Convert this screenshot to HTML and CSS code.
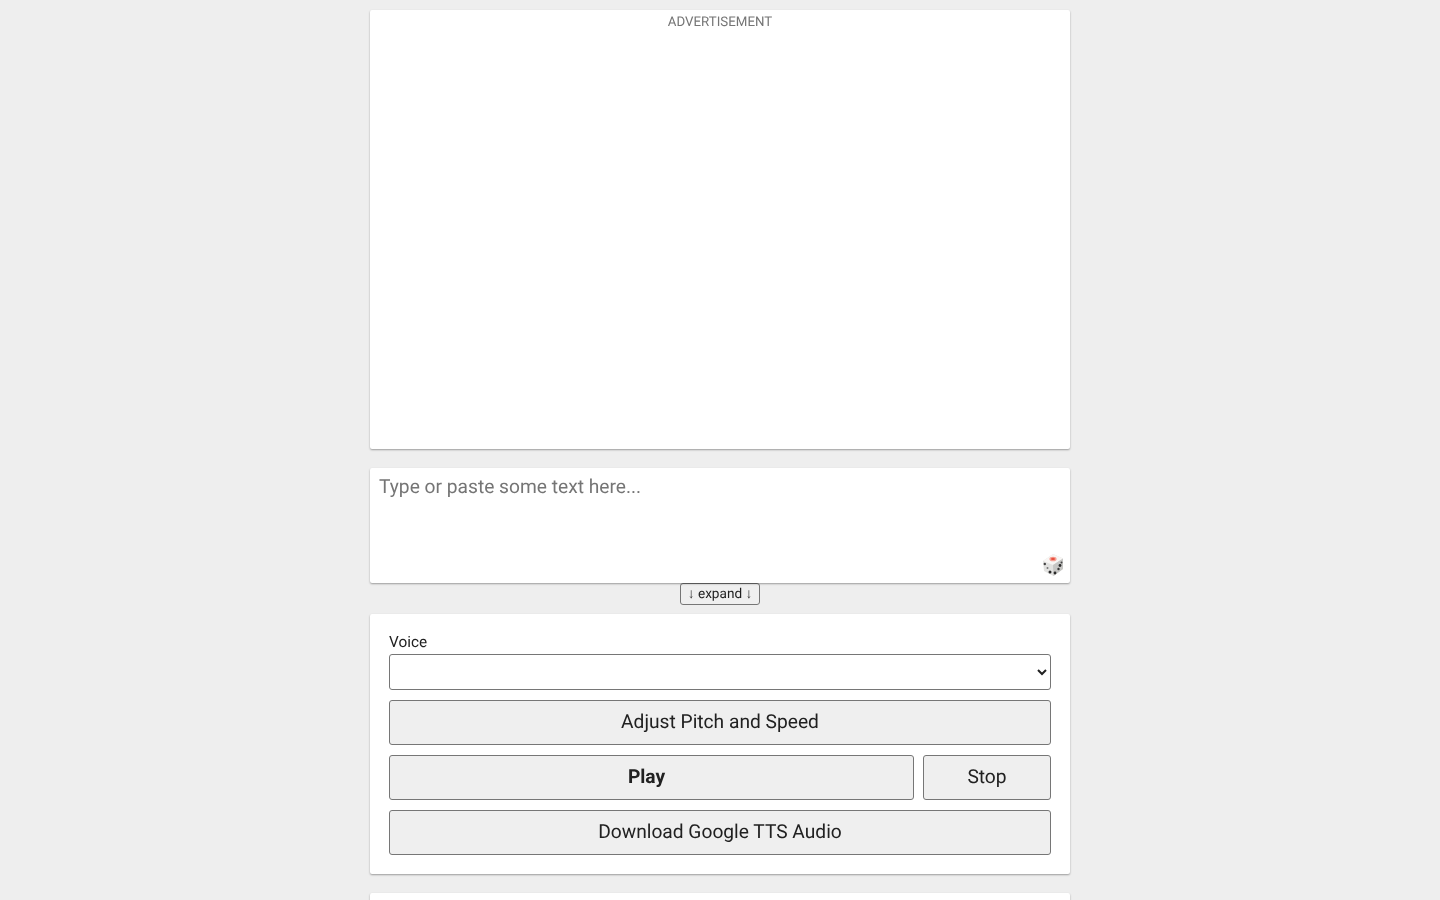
FILE: index.html
```html
<!DOCTYPE html>
<html lang="en">
<head>
<meta charset="utf-8">
<title>Text to Speech</title>
<link rel="stylesheet" href="styles.css">
</head>
<body>
<main class="page">
  <section class="card ad-card">
    <div class="ad-label">ADVERTISEMENT</div>
  </section>
  <section class="card text-card">
    <textarea class="text-input" placeholder="Type or paste some text here..."></textarea>
    <svg class="dice" viewBox="0 0 22 24" aria-hidden="true">
      <path d="M11 1 21 5.5 21 16 11.500 23 2 18 1 8Z" fill="#e2e2e0"/>
      <path d="M11 1 21 5.500 11 12 1 8Z" fill="#f8f6f4"/>
      <path d="M11 12 21 5.500 21 16 11.500 23Z" fill="#c6c6c4"/>
      <ellipse cx="11" cy="6" rx="3.600" ry="2.300" fill="#f6a094"/>
      <ellipse cx="11" cy="5.900" rx="1.900" ry="1.200" fill="#e8503f"/>
      <circle cx="2.800" cy="11" r="1.200" fill="#444"/>
      <circle cx="8" cy="19" r="1.500" fill="#2a2a2a"/>
      <circle cx="5.500" cy="15" r="1" fill="#777"/>
      <circle cx="13" cy="20" r="1.400" fill="#2a2a2a"/>
      <circle cx="16.500" cy="16" r="1.200" fill="#3a3a3a"/>
      <circle cx="18" cy="12.500" r="1.400" fill="#2a2a2a"/>
      <circle cx="19.500" cy="9.500" r="1" fill="#444"/>
    </svg>
  </section>
  <div class="expand-row">
    <button class="expand-btn" type="button">↓ expand ↓</button>
  </div>
  <section class="card controls">
    <div class="voice-field">
      <label class="voice-label" for="voice">Voice</label>
      <select class="voice-select" id="voice"><option></option></select>
    </div>
    <button class="action" type="button">Adjust Pitch and Speed</button>
    <div class="play-row">
      <button class="action play" type="button">Play</button>
      <button class="action stop" type="button">Stop</button>
    </div>
    <button class="action" type="button">Download Google TTS Audio</button>
  </section>
  <section class="card next-card"></section>
</main>
</body>
</html>
```

FILE: styles.css
```css
* {
  box-sizing: border-box;
  text-rendering: geometricPrecision;
}

html,
body {
  margin: 0;
  height: 900px;
  overflow: hidden;
}

body {
  background: #eeeeee;
  font-family: Roboto, "Liberation Sans", sans-serif;
  color: #212121;
}

.page {
  width: 700px;
  margin: 0 auto;
  padding-top: 10px;
  display: flex;
  flex-direction: column;
  opacity: 0.999;
}

.card {
  background: #ffffff;
  border-radius: 2px;
  box-shadow: 0 1px 2px rgba(0, 0, 0, 0.35);
}

.ad-card {
  height: 439px;
  margin-bottom: 19px;
  padding-top: 5px;
}

.ad-label {
  font-size: 13.3px;
  line-height: 15px;
  text-align: center;
  color: #757575;
}

.text-card {
  position: relative;
  height: 115px;
}

.text-input {
  display: block;
  width: 100%;
  height: 100%;
  padding: 7px 9px;
  border: 0;
  outline: 0;
  resize: none;
  background: transparent;
  font: 19.2px/24px Roboto, "Liberation Sans", sans-serif;
  color: #212121;
}

.text-input::placeholder {
  color: #757575;
  opacity: 1;
}

.dice {
  position: absolute;
  right: 6px;
  bottom: 6px;
  width: 22px;
  height: 24px;
  filter: blur(0.4px);
}

.expand-row {
  display: flex;
  justify-content: center;
  height: 31px;
}

.expand-btn {
  width: 80px;
  height: 22px;
  padding: 0;
  border: 1px solid #767676;
  border-radius: 3px;
  background: #efefef;
  font: 13.6px/16px Roboto, "Liberation Sans", sans-serif;
  color: #212121;
}

.controls {
  height: 260px;
  margin-bottom: 19px;
  padding: 19px;
  display: flex;
  flex-direction: column;
  gap: 10px;
}

.voice-field {
  display: flex;
  flex-direction: column;
}

.voice-label {
  margin-bottom: 3px;
  font-size: 15.36px;
  line-height: 18px;
  color: #212121;
}

.voice-select {
  width: 100%;
  height: 36px;
  border: 1px solid #767676;
  border-radius: 3px;
  background: #ffffff;
  font: 16px Roboto, "Liberation Sans", sans-serif;
  color: #212121;
}

.action {
  width: 100%;
  height: 45px;
  padding: 0 0 2px;
  border: 1px solid #767676;
  border-radius: 3px;
  background: #efefef;
  font: 19.2px/22px Roboto, "Liberation Sans", sans-serif;
  color: #212121;
}

.play-row {
  display: flex;
  gap: 9px;
}

.play {
  flex: 1;
  padding-right: 10px;
  font-weight: 700;
}

.stop {
  width: 128px;
  flex: none;
}

.next-card {
  height: 300px;
}
```
